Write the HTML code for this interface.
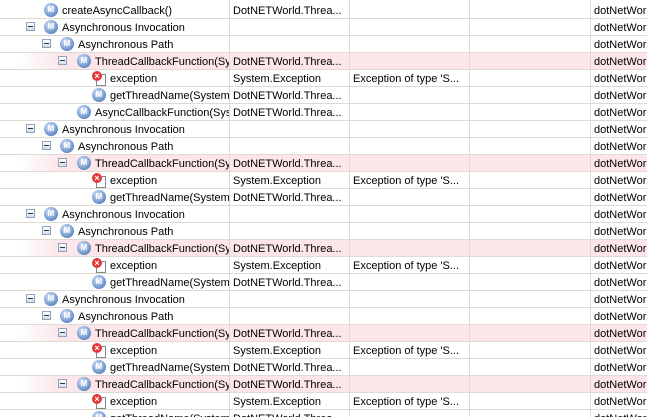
<!DOCTYPE html><html><head><style>
html,body{margin:0;width:647px;height:417px;overflow:hidden}
body{background:#fff;font-family:"Liberation Sans",sans-serif;font-size:11px;color:#000;position:relative}
.r{position:absolute;left:0;width:647px;height:16px;border-bottom:1px solid #dedbd3}
.p{background:linear-gradient(to right,#fff 19px,#fce6e9 60px,#fce6e9)}
.v{position:absolute;top:0;width:1px;height:417px;background:#dedbd3}
.t{position:absolute;top:2px;white-space:nowrap;line-height:15px}
.e{position:absolute;top:3px;width:9px;height:9px;border:1px solid #8da2bd;background:linear-gradient(#fff,#d5dde8);box-sizing:border-box}
.e:after{content:"";position:absolute;left:1px;top:3px;width:5px;height:1px;background:#333}
.m{position:absolute;top:1px;width:14px;height:14px;border-radius:50%;background:radial-gradient(circle at 40% 35%,#dbe8f8,#6a92cc 65%,#3e66a5);color:#fff;font-size:8px;font-weight:bold;text-align:center;line-height:14px}
.x{position:absolute;top:1px;width:14px;height:14px}
.x:before{content:"";position:absolute;left:4px;top:3px;width:8px;height:10px;border:1px solid #888;background:#fff}
.x:after{content:"×";position:absolute;left:0;top:0;width:10px;height:10px;border-radius:50%;background:#e03a3a;color:#fff;font-size:9px;line-height:10px;text-align:center;font-weight:bold}
</style></head><body>
<div class="r" style="top:2px"><span class="m" style="left:44px">M</span><span class="t" style="left:62px">createAsyncCallback()</span><span class="t" style="left:233px">DotNETWorld.Threa...</span><span class="t" style="left:594px">dotNetWorld</span></div>
<div class="r" style="top:19px"><span class="e" style="left:26px"></span><span class="m" style="left:44px">M</span><span class="t" style="left:62px">Asynchronous Invocation</span><span class="t" style="left:594px">dotNetWorld</span></div>
<div class="r" style="top:36px"><span class="e" style="left:42px"></span><span class="m" style="left:60px">M</span><span class="t" style="left:78px">Asynchronous Path</span><span class="t" style="left:594px">dotNetWorld</span></div>
<div class="r p" style="top:53px"><span class="e" style="left:58px"></span><span class="m" style="left:77px">M</span><span class="t" style="left:95px;width:134px;overflow:hidden">ThreadCallbackFunction(System</span><span class="t" style="left:233px">DotNETWorld.Threa...</span><span class="t" style="left:594px">dotNetWorld</span></div>
<div class="r" style="top:70px"><span class="x" style="left:92px"></span><span class="t" style="left:110px">exception</span><span class="t" style="left:233px">System.Exception</span><span class="t" style="left:353px">Exception of type 'S...</span><span class="t" style="left:594px">dotNetWorld</span></div>
<div class="r" style="top:87px"><span class="m" style="left:92px">M</span><span class="t" style="left:110px;width:119px;overflow:hidden">getThreadName(System.</span><span class="t" style="left:233px">DotNETWorld.Threa...</span><span class="t" style="left:594px">dotNetWorld</span></div>
<div class="r" style="top:104px"><span class="m" style="left:77px">M</span><span class="t" style="left:95px;width:134px;overflow:hidden">AsyncCallbackFunction(System</span><span class="t" style="left:233px">DotNETWorld.Threa...</span><span class="t" style="left:594px">dotNetWorld</span></div>

<div class="r" style="top:121px"><span class="e" style="left:26px"></span><span class="m" style="left:44px">M</span><span class="t" style="left:62px">Asynchronous Invocation</span><span class="t" style="left:594px">dotNetWorld</span></div>
<div class="r" style="top:138px"><span class="e" style="left:42px"></span><span class="m" style="left:60px">M</span><span class="t" style="left:78px">Asynchronous Path</span><span class="t" style="left:594px">dotNetWorld</span></div>
<div class="r p" style="top:155px"><span class="e" style="left:58px"></span><span class="m" style="left:77px">M</span><span class="t" style="left:95px;width:134px;overflow:hidden">ThreadCallbackFunction(System</span><span class="t" style="left:233px">DotNETWorld.Threa...</span><span class="t" style="left:594px">dotNetWorld</span></div>
<div class="r" style="top:172px"><span class="x" style="left:92px"></span><span class="t" style="left:110px">exception</span><span class="t" style="left:233px">System.Exception</span><span class="t" style="left:353px">Exception of type 'S...</span><span class="t" style="left:594px">dotNetWorld</span></div>
<div class="r" style="top:189px"><span class="m" style="left:92px">M</span><span class="t" style="left:110px;width:119px;overflow:hidden">getThreadName(System.</span><span class="t" style="left:233px">DotNETWorld.Threa...</span><span class="t" style="left:594px">dotNetWorld</span></div>

<div class="r" style="top:206px"><span class="e" style="left:26px"></span><span class="m" style="left:44px">M</span><span class="t" style="left:62px">Asynchronous Invocation</span><span class="t" style="left:594px">dotNetWorld</span></div>
<div class="r" style="top:223px"><span class="e" style="left:42px"></span><span class="m" style="left:60px">M</span><span class="t" style="left:78px">Asynchronous Path</span><span class="t" style="left:594px">dotNetWorld</span></div>
<div class="r p" style="top:240px"><span class="e" style="left:58px"></span><span class="m" style="left:77px">M</span><span class="t" style="left:95px;width:134px;overflow:hidden">ThreadCallbackFunction(System</span><span class="t" style="left:233px">DotNETWorld.Threa...</span><span class="t" style="left:594px">dotNetWorld</span></div>
<div class="r" style="top:257px"><span class="x" style="left:92px"></span><span class="t" style="left:110px">exception</span><span class="t" style="left:233px">System.Exception</span><span class="t" style="left:353px">Exception of type 'S...</span><span class="t" style="left:594px">dotNetWorld</span></div>
<div class="r" style="top:274px"><span class="m" style="left:92px">M</span><span class="t" style="left:110px;width:119px;overflow:hidden">getThreadName(System.</span><span class="t" style="left:233px">DotNETWorld.Threa...</span><span class="t" style="left:594px">dotNetWorld</span></div>

<div class="r" style="top:291px"><span class="e" style="left:26px"></span><span class="m" style="left:44px">M</span><span class="t" style="left:62px">Asynchronous Invocation</span><span class="t" style="left:594px">dotNetWorld</span></div>
<div class="r" style="top:308px"><span class="e" style="left:42px"></span><span class="m" style="left:60px">M</span><span class="t" style="left:78px">Asynchronous Path</span><span class="t" style="left:594px">dotNetWorld</span></div>
<div class="r p" style="top:325px"><span class="e" style="left:58px"></span><span class="m" style="left:77px">M</span><span class="t" style="left:95px;width:134px;overflow:hidden">ThreadCallbackFunction(System</span><span class="t" style="left:233px">DotNETWorld.Threa...</span><span class="t" style="left:594px">dotNetWorld</span></div>
<div class="r" style="top:342px"><span class="x" style="left:92px"></span><span class="t" style="left:110px">exception</span><span class="t" style="left:233px">System.Exception</span><span class="t" style="left:353px">Exception of type 'S...</span><span class="t" style="left:594px">dotNetWorld</span></div>
<div class="r" style="top:359px"><span class="m" style="left:92px">M</span><span class="t" style="left:110px;width:119px;overflow:hidden">getThreadName(System.</span><span class="t" style="left:233px">DotNETWorld.Threa...</span><span class="t" style="left:594px">dotNetWorld</span></div>
<div class="r p" style="top:376px"><span class="e" style="left:58px"></span><span class="m" style="left:77px">M</span><span class="t" style="left:95px;width:134px;overflow:hidden">ThreadCallbackFunction(System</span><span class="t" style="left:233px">DotNETWorld.Threa...</span><span class="t" style="left:594px">dotNetWorld</span></div>
<div class="r" style="top:393px"><span class="x" style="left:92px"></span><span class="t" style="left:110px">exception</span><span class="t" style="left:233px">System.Exception</span><span class="t" style="left:353px">Exception of type 'S...</span><span class="t" style="left:594px">dotNetWorld</span></div>
<div class="r" style="top:410px"><span class="m" style="left:92px">M</span><span class="t" style="left:110px;width:119px;overflow:hidden">getThreadName(System.</span><span class="t" style="left:233px">DotNETWorld.Threa...</span><span class="t" style="left:594px">dotNetWorld</span></div>

<div class="v" style="left:229px"></div><div class="v" style="left:349px"></div><div class="v" style="left:469px"></div><div class="v" style="left:590px"></div>
</body></html>
